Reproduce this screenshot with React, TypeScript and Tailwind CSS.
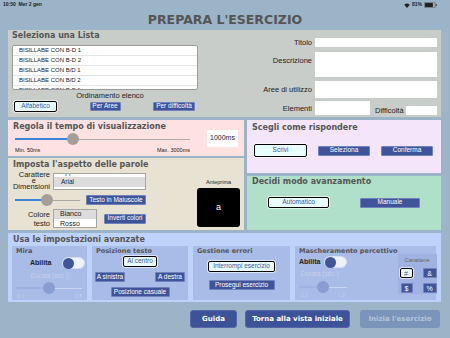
import type { ReactNode } from "react"

const heading = "font-['DejaVu_Sans',sans-serif] font-bold text-[#555]"

function BlueBtn({ children, className = "" }: { children: ReactNode; className?: string }) {
  return (
    <div
      className={`flex items-center justify-center whitespace-nowrap rounded-[1px] border border-[#6f82bd] bg-[#3f5499] text-[6.5px] leading-none text-white ${className}`}
    >
      {children}
    </div>
  )
}

function LightBtn({ children, className = "" }: { children: ReactNode; className?: string }) {
  return (
    <div
      className={`flex items-center justify-center whitespace-nowrap rounded-[2px] border border-black bg-[#e8fefd] text-[6.5px] leading-none text-[#41549a] shadow-[0_0_0_1px_rgba(255,255,255,0.6)] ${className}`}
    >
      {children}
    </div>
  )
}

function Slider({ width, at, faded = false }: { width: number; at: number; faded?: boolean }) {
  return (
    <div className="relative h-[12px]" style={{ width }}>
      <div className={`absolute left-0 right-0 top-[5.5px] h-px ${faded ? "bg-[#c9d4ef]" : "bg-[#a9a9a9]"}`} />
      <div
        className={`absolute left-0 top-[5px] h-[2px] ${faded ? "bg-[#9fb2e4]" : "bg-[#3d84dc]"}`}
        style={{ width: at }}
      />
      <div
        className={`absolute top-0 h-[12px] w-[12px] rounded-full ${faded ? "bg-[#8a9dd3]" : "bg-[#a59f99]"}`}
        style={{ left: at - 6 }}
      />
    </div>
  )
}

function Toggle() {
  return (
    <div className="flex h-[12px] w-[23px] items-center rounded-full border border-[#d5def3] bg-[#eef2fb]">
      <div className="h-[11px] w-[11px] rounded-full bg-[#3f5499]" />
    </div>
  )
}

function StatusBar() {
  return (
    <div className="flex h-[10px] items-center justify-between px-[3px] text-[5px] font-bold text-[#222]">
      <span>10:50&nbsp;&nbsp;Mer 2 gen</span>
      <div className="flex items-center gap-[2px] pr-[10px]">
        <svg width="6" height="5" viewBox="0 0 12 10">
          <path d="M6 10 0.5 3.5a8.5 8.5 0 0 1 11 0z" fill="#222" />
        </svg>
        <span>81%</span>
        <svg width="13" height="6" viewBox="0 0 26 12">
          <rect x="0.5" y="0.5" width="22" height="11" rx="3" fill="none" stroke="#333" />
          <rect x="2" y="2" width="16" height="8" rx="1.5" fill="#222" />
          <rect x="23.5" y="4" width="2" height="4" rx="1" fill="#333" />
        </svg>
      </div>
    </div>
  )
}

const lists = [
  "BISILLABE CON B-D 1",
  "BISILLABE CON B-D 2",
  "BISILLABE CON B/D 1",
  "BISILLABE CON B/D 2",
  "BISILLABE CON P-B 1",
]

function ListPanel() {
  return (
    <div className="flex h-[87px] bg-[#c8cdc9]">
      <div className="w-[190px] pl-[4px]">
        <div className={`${heading} pt-[1px] text-[8px] leading-[10px]`}>Seleziona una Lista</div>
        <div className="mt-[4px] h-[45px] w-[186px] overflow-hidden rounded-[2px] border border-[#9a9a9a] bg-white">
          {lists.map((l) => (
            <div key={l} className="flex h-[10px] items-center border-b border-[#e4e4e4] pl-[6px] text-[6px] text-[#222]">
              {l}
            </div>
          ))}
        </div>
        <div className="mt-[1px] w-[186px] pl-[10px] text-center text-[7.5px] leading-[10px] text-[#222]">
          Ordinamento elenco
        </div>
        <div className="flex w-[186px] items-center justify-between pl-[2px] pr-[3px]">
          <LightBtn className="h-[11px] w-[43px]">Alfabetico</LightBtn>
          <BlueBtn className="h-[9px] w-[31px]">Per Aree</BlueBtn>
          <BlueBtn className="h-[9px] w-[42px]">Per difficoltà</BlueBtn>
        </div>
      </div>
      <div className="flex flex-1 flex-col pr-[4px] pt-[7px] text-[7.5px] text-[#222]">
        <div className="flex items-center">
          <span className="flex-1 pr-[3px] text-right">Titolo</span>
          <div className="h-[9px] w-[122px] bg-white" />
        </div>
        <div className="mt-[4px] flex items-start">
          <span className="flex-1 pr-[3px] pt-[3px] text-right">Descrizione</span>
          <div className="h-[25px] w-[122px] bg-white" />
        </div>
        <div className="mt-[4px] flex items-center">
          <span className="flex-1 pr-[3px] text-right">Aree di utilizzo</span>
          <div className="h-[17px] w-[122px] bg-white" />
        </div>
        <div className="mt-[3px] flex items-end">
          <span className="flex-1 self-center pr-[3px] text-right">Elementi</span>
          <div className="h-[14px] w-[55px] bg-white" />
          <span className="ml-[5px] mr-[1px] w-[30px] leading-[9px]">Difficoltà</span>
          <div className="h-[9px] w-[31px] bg-white" />
        </div>
      </div>
    </div>
  )
}

function TimePanel() {
  return (
    <div className="h-[36px] bg-[#fde2e1]">
      <div className={`${heading} pl-[5px] pt-[2px] text-[8px] leading-[10px]`}>
        Regola il tempo di visualizzazione
      </div>
      <div className="flex items-start">
        <div className="ml-[7px] w-[175px]">
          <div className="mt-[1px]">
            <Slider width={175} at={58} />
          </div>
          <div className="mt-[2px] flex justify-between text-[5.5px] leading-[6px] text-[#222]">
            <span>Min. 50ms</span>
            <span>Max. 3000ms</span>
          </div>
        </div>
        <div className="ml-[17px] -mt-[2px] flex h-[17px] w-[31px] items-center justify-center bg-white text-[7px] text-[#222]">
          1000ms
        </div>
      </div>
    </div>
  )
}

function LookPanel() {
  return (
    <div className="flex h-[72px] flex-col bg-[#e8e2d2]">
      <div className={`${heading} pl-[5px] pt-[2px] text-[8px] leading-[10px]`}>Imposta l'aspetto delle parole</div>
      <div className="flex flex-1">
        <div className="flex flex-col text-[#222]">
          <div className="mt-[2px] flex items-center">
            <div className="flex w-[42px] flex-col items-end text-[7.5px] leading-[6px]">
              <span>Carattere</span>
              <span className="pr-[14px]">e</span>
              <span>Dimensioni</span>
            </div>
            <div className="ml-[3px] h-[17px] w-[93px] overflow-hidden border border-[#a5a5a5] bg-white text-[6.5px]">
              <div className="-mt-[7px] flex h-[10px] items-center pl-[7px]">Apple Braille</div>
              <div className="flex h-[10px] items-center bg-[#dcdcdc] pl-[7px]">Arial</div>
              <div className="flex h-[10px] items-center pl-[7px]">Arial Hebrew</div>
            </div>
          </div>
          <div className="mt-[4px] flex items-center">
            <div className="ml-[7px]">
              <Slider width={65} at={32} />
            </div>
            <BlueBtn className="ml-[6px] h-[10px] w-[60px]">Testo in Maiuscole</BlueBtn>
          </div>
          <div className="mt-[3px] flex items-center">
            <div className="flex w-[42px] flex-col items-end text-[7.5px] leading-[9px]">
              <span>Colore</span>
              <span>testo</span>
            </div>
            <div className="ml-[3px] h-[19px] w-[44px] overflow-hidden border border-[#a5a5a5] bg-white text-[7px]">
              <div className="flex h-[9px] items-center bg-[#dcdcdc] pl-[6px]">Bianco</div>
              <div className="flex h-[10px] items-center pl-[6px]">Rosso</div>
            </div>
            <BlueBtn className="ml-[7px] h-[10px] w-[42px]">Inverti colori</BlueBtn>
          </div>
        </div>
        <div className="ml-auto mr-[4px] flex w-[43px] flex-col items-center">
          <div className="mt-[9px] text-[5.5px] leading-[6px] text-[#222]">Anteprima</div>
          <div className="mt-[3px] flex h-[39px] w-[43px] items-center justify-center rounded-[3px] bg-black text-[9px] text-white">
            a
          </div>
        </div>
      </div>
    </div>
  )
}

function AnswerPanel() {
  return (
    <div className="h-[53px] bg-[#f5e5fa]">
      <div className={`${heading} pl-[5px] pt-[3px] text-[8px] leading-[10px]`}>Scegli come rispondere</div>
      <div className="mt-[11px] flex h-[13px] items-center pl-[7px]">
        <LightBtn className="h-[13px] w-[53px]">Scrivi</LightBtn>
        <BlueBtn className="ml-[11px] h-[10px] w-[52px]">Seleziona</BlueBtn>
        <BlueBtn className="ml-[11px] h-[10px] w-[52px]">Conferma</BlueBtn>
      </div>
    </div>
  )
}

function AdvancePanel() {
  return (
    <div className="h-[54px] bg-[#b0e0c9]">
      <div className={`${heading} pl-[5px] pt-[1px] text-[8px] leading-[10px]`}>Decidi modo avanzamento</div>
      <div className="mt-[10px] flex h-[11px] items-center pl-[21px]">
        <LightBtn className="h-[11px] w-[61px]">Automatico</LightBtn>
        <BlueBtn className="ml-[31px] h-[10px] w-[60px]">Manuale</BlueBtn>
      </div>
    </div>
  )
}

const sub = "h-[54px] bg-[#a9bbe7]"
const subTitle = `${heading} pt-[1px] text-[6.5px] leading-[8px] whitespace-nowrap`
const faded = "text-[#c6d0ea]"

function AdvancedPanel() {
  return (
    <div className="h-[69px] bg-[#bed2fa] pl-[4px]">
      <div className={`${heading} pl-[1px] pt-[2px] text-[8px] leading-[10px]`}>Usa le impostazioni avanzate</div>
      <div className="mt-[1px] flex gap-[5px]">
        <div className={`${sub} w-[75px]`}>
          <div className={`${subTitle} pl-[4px]`}>Mira</div>
          <div className="mt-[2px] flex items-center pl-[18px]">
            <span className="text-[7px] font-bold text-[#222]">Abilita</span>
            <div className="ml-[11px]">
              <Toggle />
            </div>
          </div>
          <div className={`mt-[3px] text-center text-[6.5px] leading-[8px] ${faded}`}>Durata (sec.)</div>
          <div className="ml-[4px] mt-[2px]">
            <Slider width={66} at={33} faded />
          </div>
          <div className={`flex w-[70px] justify-between pl-[5px] text-[5px] leading-[5px] ${faded}`}>
            <span>0,1</span>
            <span>0,5</span>
          </div>
        </div>
        <div className={`${sub} w-[96px]`}>
          <div className={`${subTitle} pl-[4px]`}>Posizione testo</div>
          <div className="mt-[1px] flex justify-center">
            <LightBtn className="h-[11px] w-[34px]">Al centro</LightBtn>
          </div>
          <div className="mt-[5px] flex justify-between px-[3px]">
            <BlueBtn className="h-[10px] w-[30px]">A sinistra</BlueBtn>
            <BlueBtn className="h-[10px] w-[30px]">A destra</BlueBtn>
          </div>
          <div className="mt-[5px] flex justify-center">
            <BlueBtn className="h-[10px] w-[59px]">Posizione casuale</BlueBtn>
          </div>
        </div>
        <div className={`${sub} w-[97px]`}>
          <div className={`${subTitle} pl-[4px]`}>Gestione errori</div>
          <div className="mt-[6px] flex justify-center">
            <LightBtn className="h-[11px] w-[67px]">Interrompi esercizio</LightBtn>
          </div>
          <div className="mt-[8px] flex justify-center">
            <BlueBtn className="h-[10px] w-[66px]">Prosegui esercizio</BlueBtn>
          </div>
        </div>
        <div className={`${sub} flex w-[141px]`}>
          <div className="pl-[4px]">
            <div className={subTitle}>Mascheramento percettivo</div>
            <div className="mt-[1px] flex items-center">
              <span className="text-[7px] font-bold text-[#222]">Abilita</span>
              <div className="ml-[4px]">
                <Toggle />
              </div>
            </div>
            <div className={`mt-[2px] pl-[2px] text-[6.5px] leading-[8px] ${faded}`}>Durata (sec.)</div>
            <div className="mt-[3px]">
              <Slider width={48} at={24} faded />
            </div>
            <div className={`flex w-[48px] justify-between px-[2px] text-[5px] leading-[5px] ${faded}`}>
              <span>0,1</span>
              <span>1,0</span>
            </div>
          </div>
          <div className="ml-auto mr-[4px] mt-[8px] h-[40px] w-[42px] bg-[#9fb2e2]">
            <div className="mt-[2px] text-center text-[6px] leading-[8px] text-[#666]">Carattere</div>
            <div className="mt-[4px] flex pl-[2px]">
              <LightBtn className="h-[10px] w-[13px] text-[7px]">#</LightBtn>
              <BlueBtn className="ml-[10px] h-[10px] w-[14px] text-[7px]">&amp;</BlueBtn>
            </div>
            <div className="mt-[5px] flex pl-[3px]">
              <BlueBtn className="h-[10px] w-[12px] text-[7px]">$</BlueBtn>
              <BlueBtn className="ml-[10px] h-[10px] w-[14px] text-[7px]">%</BlueBtn>
            </div>
          </div>
        </div>
      </div>
    </div>
  )
}

export default function App() {
  return (
    <div className="h-[338px] w-[450px] overflow-hidden bg-[#9bb4c7] font-['Liberation_Sans',sans-serif]">
      <StatusBar />
      <h1 className={`${heading} flex h-[20px] items-center justify-center text-[12.5px]`}>PREPARA L'ESERCIZIO</h1>
      <div className="ml-[8px] flex w-[433px] flex-col gap-[3px]">
        <ListPanel />
        <div className="flex gap-[3px]">
          <div className="flex w-[236px] flex-col gap-[2px]">
            <TimePanel />
            <LookPanel />
          </div>
          <div className="flex w-[194px] flex-col gap-[3px]">
            <AnswerPanel />
            <AdvancePanel />
          </div>
        </div>
        <AdvancedPanel />
      </div>
      <div className="mt-[8px] flex justify-end pr-[10px] font-['DejaVu_Sans',sans-serif] text-[7px] font-bold">
        <div className="flex h-[18px] w-[47px] items-center justify-center rounded-[3px] border border-[#5468aa] bg-[#3d5398] text-white">
          Guida
        </div>
        <div className="ml-[8px] flex h-[18px] w-[105px] items-center justify-center rounded-[3px] border border-[#5468aa] bg-[#3d5398] text-white">
          Torna alla vista iniziale
        </div>
        <div className="ml-[10px] flex h-[18px] w-[80px] items-center justify-center rounded-[3px] bg-[#7b95ba] text-[#b6c6da]">
          Inizia l'esercizio
        </div>
      </div>
    </div>
  )
}
